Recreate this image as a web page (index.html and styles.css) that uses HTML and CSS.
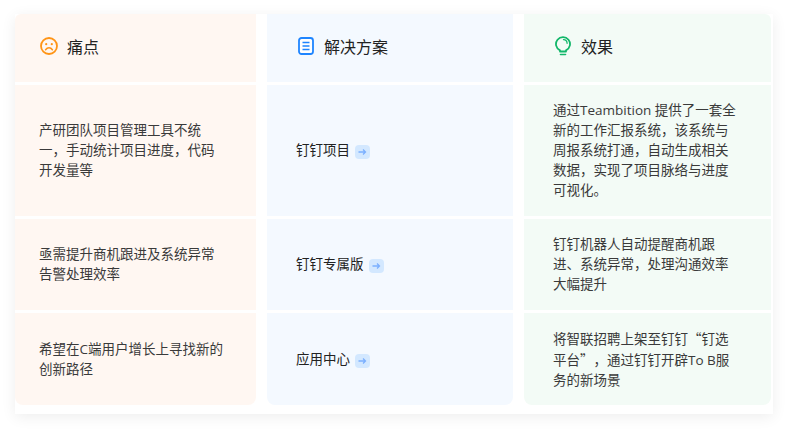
FILE: index.html
```html
<!DOCTYPE html>
<html lang="zh-CN">
<head>
<meta charset="utf-8">
<title>痛点 解决方案 效果</title>
<link rel="stylesheet" href="styles.css">
</head>
<body>
<main class="board">
  <div class="cell head pain">
    <svg class="icon" viewBox="0 0 18 18"><circle cx="9" cy="9" r="8" fill="none" stroke="#ff9416" stroke-width="1.800"/><circle cx="6.200" cy="7.200" r="1.100" fill="#ff9416"/><circle cx="11.800" cy="7.200" r="1.100" fill="#ff9416"/><path d="M5.600 12.800c1-1.400 2.100-2 3.400-2s2.400.6 3.400 2" fill="none" stroke="#ff9416" stroke-width="1.500" stroke-linecap="round"/></svg>
    <span>痛点</span>
  </div>
  <div class="cell head plan">
    <svg class="icon icon-doc" viewBox="0 0 16 18"><rect x="1" y="1" width="14" height="16" rx="2.500" fill="#fff" stroke="#1f85ff" stroke-width="1.800"/><path d="M4.500 5.500h7M4.500 9h7M4.500 12.500h7" stroke="#1f85ff" stroke-width="1.700"/></svg>
    <span>解决方案</span>
  </div>
  <div class="cell head gain">
    <svg class="icon icon-bulb" viewBox="0 0 16 20"><path d="M5 14.400A7 7 0 1 1 11 14.400V15.500H5Z" fill="#f3fbf6" stroke="#12b76a" stroke-width="1.800" stroke-linejoin="round"/><path d="M8.500 3.600a3.800 3.800 0 0 1 3.600 3.700" fill="none" stroke="#12b76a" stroke-width="1.300" stroke-linecap="round"/><path d="M5.500 18.500h5" stroke="#12b76a" stroke-width="1.600" stroke-linecap="round"/></svg>
    <span>效果</span>
  </div>

  <div class="cell body pain"><p>产研团队项目管理工具不统一，手动统计项目进度，代码开发量等</p></div>
  <div class="cell body plan"><p class="link">钉钉项目<span class="go"><svg viewBox="0 0 15 14"><path d="M3.500 7h7M8 4.500 10.500 7 8 9.500" fill="none" stroke="#7cb0ff" stroke-width="1.300"/></svg></span></p></div>
  <div class="cell body gain"><p>通过Teambition 提供了一套全新的工作汇报系统，该系统与周报系统打通，自动生成相关数据，实现了项目脉络与进度可视化。</p></div>

  <div class="cell body pain"><p>亟需提升商机跟进及系统异常告警处理效率</p></div>
  <div class="cell body plan"><p class="link">钉钉专属版<span class="go"><svg viewBox="0 0 15 14"><path d="M3.500 7h7M8 4.500 10.500 7 8 9.500" fill="none" stroke="#7cb0ff" stroke-width="1.300"/></svg></span></p></div>
  <div class="cell body gain"><p>钉钉机器人自动提醒商机跟进、系统异常，处理沟通效率大幅提升</p></div>

  <div class="cell body pain round"><p>希望在C端用户增长上寻找新的创新路径</p></div>
  <div class="cell body plan round"><p class="link">应用中心<span class="go"><svg viewBox="0 0 15 14"><path d="M3.500 7h7M8 4.500 10.500 7 8 9.500" fill="none" stroke="#7cb0ff" stroke-width="1.300"/></svg></span></p></div>
  <div class="cell body gain round"><p>将智联招聘上架至钉钉<span class="cjk">“钉选平台”，</span>通过钉钉开辟To B服务的新场景</p></div>
</main>
</body>
</html>
```
FILE: styles.css
```css
* { box-sizing: border-box; }
html, body { margin: 0; background: #fff; }
body {
  width: 788px;
  height: 429px;
  padding: 14px 15px 15px;
  font-family: "Open Sans", "Noto Sans CJK SC", sans-serif;
  color: #3a3a3a;
}
.board {
  width: 758px;
  height: 400px;
  padding: 0 2px 9px 0;
  display: grid;
  grid-template-columns: 241px 246px 247px;
  grid-template-rows: 68px 131px 91px 92px;
  column-gap: 11px;
  row-gap: 3px;
  background: #fff;
  box-shadow: 0 3px 14px rgba(0, 0, 0, 0.07);
}
.cell { display: flex; align-items: center; }
.pain { background: #fff7f2; padding-left: 24px; padding-right: 31px; }
.plan { background: #f4f9ff; padding-left: 29px; padding-right: 26px; }
.gain { background: #f3fbf6; padding-left: 29px; padding-right: 32px; }
.head { font-size: 16px; color: #222; padding-bottom: 4px; }
.pain.head { padding-left: 25px; gap: 9px; }
.plan.head { padding-left: 31px; gap: 10px; }
.gain.head { padding-left: 31px; gap: 10px; }
.head.pain { border-top-left-radius: 6px; }
.head.gain { border-top-right-radius: 6px; }
.body { padding-bottom: 1px; }
.round { border-bottom-left-radius: 8px; border-bottom-right-radius: 8px; }
.icon { width: 18px; height: 18px; flex: none; }
.icon-doc { width: 16px; height: 18px; }
.icon-bulb { width: 16px; height: 20px; }
.body p { margin: 0; font-size: 13.5px; line-height: 20px; text-spacing-trim: space-all; }
.cjk { font-family: "Noto Sans CJK SC", sans-serif; }
.link { display: flex; align-items: center; gap: 5px; color: #222; }
.go {
  width: 15px;
  height: 14px;
  margin-top: 4px;
  border-radius: 4px;
  background: #d3e8ff;
  display: flex;
}
.go svg { width: 15px; height: 14px; }
```
